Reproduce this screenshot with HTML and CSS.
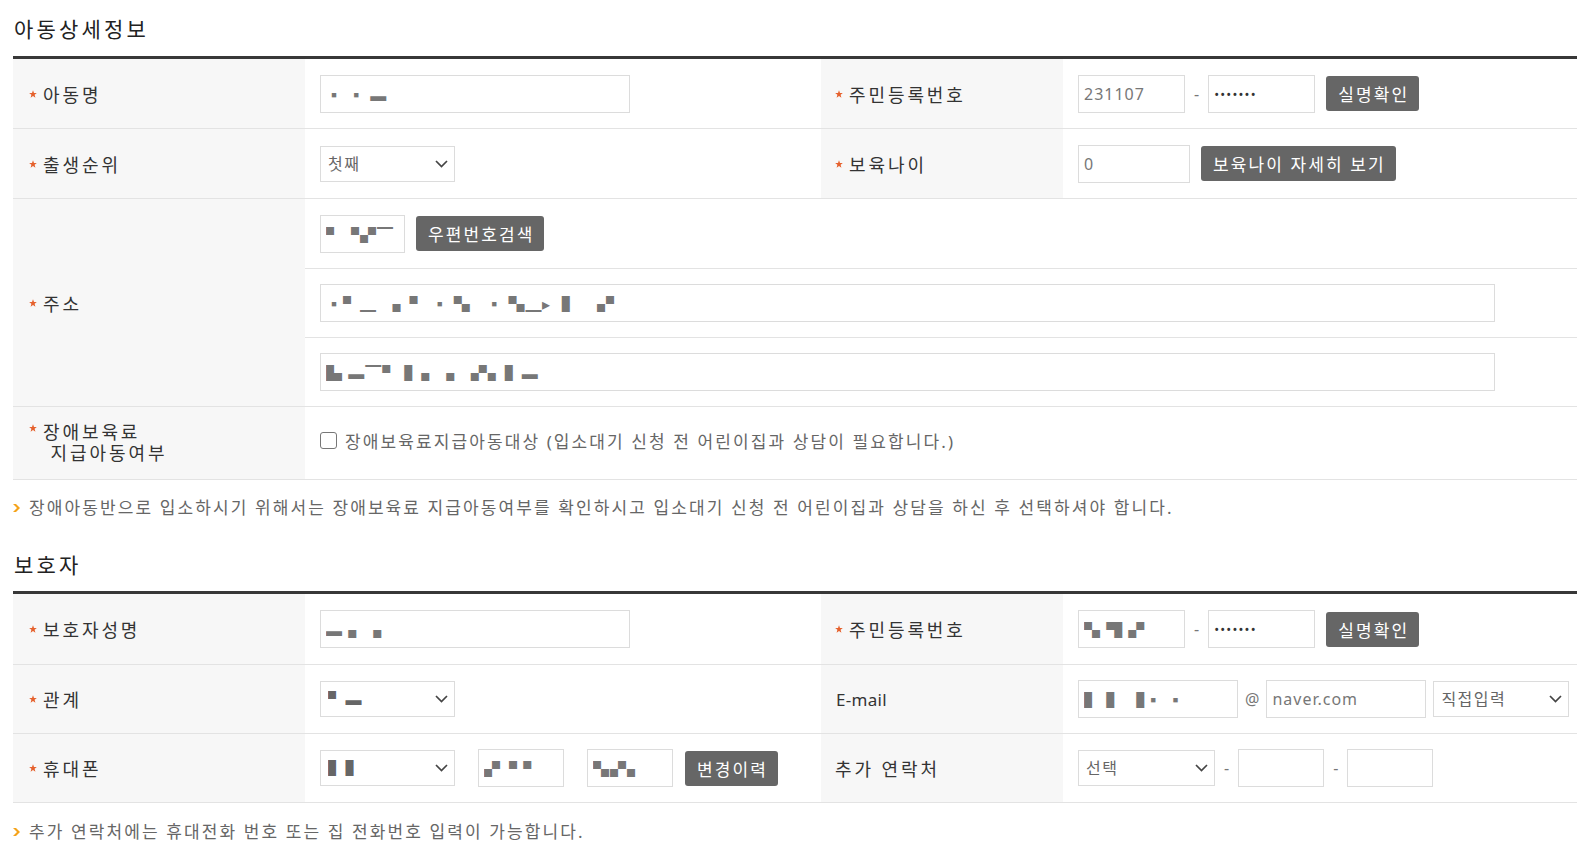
FILE: index.html
```html
<!DOCTYPE html>
<html lang="ko">
<head>
<meta charset="utf-8">
<title>아동상세정보</title>
<link rel="stylesheet" href="styles.css">
</head>
<body>
<svg class="defs" width="0" height="0" aria-hidden="true">
  <defs>
    <symbol id="star" viewBox="0 0 10 10"><path d="M5 0.3 L6.25 3.7 L9.8 3.8 L7 6 L8 9.6 L5 7.5 L2 9.6 L3 6 L0.2 3.8 L3.75 3.7 Z"/></symbol>
    <symbol id="chev" viewBox="0 0 13 8"><polyline points="1,1 6.5,6.5 12,1" fill="none" stroke-width="1.7"/></symbol>
    <symbol id="arrow" viewBox="0 0 7 8"><path d="M0 0 H3 L7 4 L3 8 H0 L4 4 Z"/></symbol>
  </defs>
</svg>

<div class="page">
  <h2 class="sec-title">아동상세정보</h2>
  <div class="form form-child">
    <div class="th"><svg class="req"><use href="#star"/></svg>아동명</div>
    <div class="td"><input class="ipt w-name" type="text" value="▪ ▪ ▬"></div>
    <div class="th col3"><svg class="req"><use href="#star"/></svg>주민등록번호</div>
    <div class="td">
      <input class="ipt w-jumin" type="text" value="231107"><span class="dash">-</span><input class="ipt w-jumin pw" type="password" value="1234567"><button class="btn" type="button">실명확인</button>
    </div>

    <div class="th"><svg class="req"><use href="#star"/></svg>출생순위</div>
    <div class="td">
      <span class="sel w-sel"><select><option>첫째</option><option>둘째</option><option>셋째</option></select><svg class="chev"><use href="#chev"/></svg></span>
    </div>
    <div class="th col3"><svg class="req"><use href="#star"/></svg>보육나이</div>
    <div class="td">
      <input class="ipt w-age" type="text" value="0"><button class="btn btn-age" type="button">보육나이 자세히 보기</button>
    </div>

    <div class="th rspan3"><svg class="req"><use href="#star"/></svg>주소</div>
    <div class="td span3">
      <input class="ipt w-zip" type="text" value="▘▝▞▔"><button class="btn" type="button">우편번호검색</button>
    </div>
    <div class="td span3"><input class="ipt w-addr" type="text" value="▪▘▁   ▖▘ ▪ ▚   ▪ ▚▁▸  ▌  ▗▘"></div>
    <div class="td span3"><input class="ipt w-addr" type="text" value="▙ ▬▔▘ ▌▖▗   ▞▖▌▬"></div>

    <div class="th th-2line"><svg class="req"><use href="#star"/></svg><span>장애보육료<br>&nbsp;지급아동여부</span></div>
    <div class="td span3 td-chk">
      <label class="chk"><input type="checkbox"><span>장애보육료지급아동대상 (입소대기 신청 전 어린이집과 상담이 필요합니다.)</span></label>
    </div>
  </div>
  <p class="note"><svg class="arr"><use href="#arrow"/></svg>장애아동반으로 입소하시기 위해서는 장애보육료 지급아동여부를 확인하시고 입소대기 신청 전 어린이집과 상담을 하신 후 선택하셔야 합니다.</p>

  <h2 class="sec-title sec-title-2">보호자</h2>
  <div class="form form-guard">
    <div class="th"><svg class="req"><use href="#star"/></svg>보호자성명</div>
    <div class="td"><input class="ipt w-name" type="text" value="▬ ▖▗"></div>
    <div class="th col3"><svg class="req"><use href="#star"/></svg>주민등록번호</div>
    <div class="td">
      <input class="ipt w-jumin" type="text" value="▚ ▜ ▞"><span class="dash">-</span><input class="ipt w-jumin pw" type="password" value="1234567"><button class="btn" type="button">실명확인</button>
    </div>

    <div class="th"><svg class="req"><use href="#star"/></svg>관계</div>
    <div class="td">
      <span class="sel w-sel"><select><option>▘▬</option></select><svg class="chev"><use href="#chev"/></svg></span>
    </div>
    <div class="th col3 latin">E-mail</div>
    <div class="td">
      <input class="ipt w-mail" type="text" value="▌ ▌ ▐▪ ▪"><span class="at">@</span><input class="ipt w-mail" type="text" value="naver.com"><span class="sel w-sel2"><select><option>직접입력</option><option>naver.com</option></select><svg class="chev"><use href="#chev"/></svg></span>
    </div>

    <div class="th"><svg class="req"><use href="#star"/></svg>휴대폰</div>
    <div class="td">
      <span class="sel w-sel"><select><option>▌▌</option></select><svg class="chev"><use href="#chev"/></svg></span><input class="ipt w-tel gap-l" type="text" value="▞▝ ▘"><input class="ipt w-tel gap-l" type="text" value="▚▞▖"><button class="btn btn-hist" type="button">변경이력</button>
    </div>
    <div class="th col3">추가 연락처</div>
    <div class="td">
      <span class="sel w-sel2"><select><option>선택</option><option>010</option><option>02</option></select><svg class="chev"><use href="#chev"/></svg></span><span class="dash">-</span><input class="ipt w-tel" type="text" value=""><span class="dash">-</span><input class="ipt w-tel" type="text" value="">
    </div>
  </div>
  <p class="note note-2"><svg class="arr"><use href="#arrow"/></svg>추가 연락처에는 휴대전화 번호 또는 집 전화번호 입력이 가능합니다.</p>
</div>
</body>
</html>
```

FILE: styles.css
```css
* { box-sizing: border-box; }

html, body {
  margin: 0;
  background: #fff;
}

body {
  font-family: "Noto Sans", "Noto Sans CJK KR", sans-serif;
  color: #333;
}

.defs {
  position: absolute;
  width: 0;
  height: 0;
  overflow: hidden;
}

.page {
  width: 1577px;
  padding-left: 13px;
}

.sec-title {
  margin: 14px 0 12px 1px;
  height: 30px;
  font-size: 21px;
  font-weight: 400;
  line-height: 30px;
  letter-spacing: 3.2px;
  color: #222;
}

.sec-title-2 {
  margin-top: 30px;
  margin-bottom: 11px;
}

.form {
  display: grid;
  grid-template-columns: 292px 516px 242px 1fr;
  border-top: 3px solid #383838;
}

.form-child {
  grid-template-rows: 70px 70px 70px 69px 69px 73px;
}

.form-guard {
  grid-template-rows: 71px 69px 69px;
}

.th,
.td {
  display: flex;
  align-items: center;
  min-width: 0;
  border-bottom: 1px solid #e3e3e3;
}

.th {
  background: #f7f7f7;
  padding-left: 16px;
  font-size: 18px;
  letter-spacing: 2.9px;
  color: #333;
  white-space: nowrap;
}

.th.col3 {
  padding-left: 14px;
}

.th.latin {
  padding-left: 15px;
  font-size: 17px;
  letter-spacing: 0.3px;
}

.th-2line {
  line-height: 21px;
}

.td {
  padding-left: 15px;
}

.span3 { grid-column: span 3; }
.rspan3 { grid-row: span 3; }

.req {
  width: 8px;
  height: 8px;
  fill: #e5612d;
  margin-right: 6px;
  flex: none;
  align-self: center;
}

.th-2line .req {
  align-self: flex-start;
  margin-top: 17px;
}

/* inputs */
.ipt {
  height: 38px;
  border: 1px solid #dcdcdc;
  background: #fff;
  padding: 0 5px;
  font-family: "Noto Sans", "Noto Sans CJK KR", sans-serif;
  font-size: 16px;
  letter-spacing: 1px;
  color: #777;
  outline: none;
  margin: 0;
  border-radius: 0;
}

.pw {
  font-size: 13px;
  letter-spacing: 1.2px;
  color: #333;
}

.w-name { width: 310px; }
.w-jumin { width: 107px; }
.w-age { width: 112px; }
.w-zip { width: 85px; }
.w-addr { width: 1175px; }
.w-mail { width: 160px; }
.w-tel { width: 86px; }
.gap-l { margin-left: 23px; }

.dash {
  margin: 0 9px;
  font-size: 16px;
  color: #777;
}

.at {
  margin: 0 7px;
  font-size: 16px;
  color: #777;
}

/* selects */
.sel {
  position: relative;
  display: inline-block;
  flex: none;
}

.sel select {
  appearance: none;
  -webkit-appearance: none;
  width: 100%;
  height: 36px;
  border: 1px solid #dcdcdc;
  border-radius: 0;
  background: #fff;
  padding: 0 24px 0 7px;
  font-family: "Noto Sans", "Noto Sans CJK KR", sans-serif;
  font-size: 16px;
  letter-spacing: 1.5px;
  color: #666;
  outline: none;
  margin: 0;
}

.sel .chev {
  position: absolute;
  right: 7px;
  top: 14px;
  width: 13px;
  height: 8px;
  stroke: #444;
  pointer-events: none;
}

.w-sel { width: 135px; }
.w-sel2 { width: 137px; }
.at + .ipt + .w-sel2 { margin-left: 7px; width: 136px; }

/* buttons */
.btn {
  height: 35px;
  margin-left: 11px;
  padding: 0 10px 0 12px;
  border: 0;
  border-radius: 3px;
  background: #666;
  color: #fff;
  font-family: "Noto Sans", "Noto Sans CJK KR", sans-serif;
  font-size: 17px;
  letter-spacing: 2.1px;
  white-space: nowrap;
  cursor: pointer;
}

.btn-age { margin-left: 11px; }
.btn-hist { margin-left: 12px; }

/* checkbox */
.td-chk {
  padding-bottom: 6px;
}

.chk {
  display: flex;
  align-items: center;
  font-size: 17px;
  letter-spacing: 2.1px;
  color: #666;
}

.chk input {
  appearance: none;
  -webkit-appearance: none;
  width: 17px;
  height: 17px;
  margin: 0 8px 0 0;
  border: 1.5px solid #777;
  border-radius: 3px;
  background: #fff;
}

/* notes */
.note {
  display: flex;
  align-items: center;
  margin: 16px 0 0 0;
  height: 24px;
  font-size: 17px;
  line-height: 24px;
  letter-spacing: 2.1px;
  color: #666;
  white-space: nowrap;
}

.note-2 {
  margin-top: 17px;
}

.arr {
  width: 7px;
  height: 8px;
  fill: #f5a31a;
  margin-right: 9px;
  flex: none;
}
```
